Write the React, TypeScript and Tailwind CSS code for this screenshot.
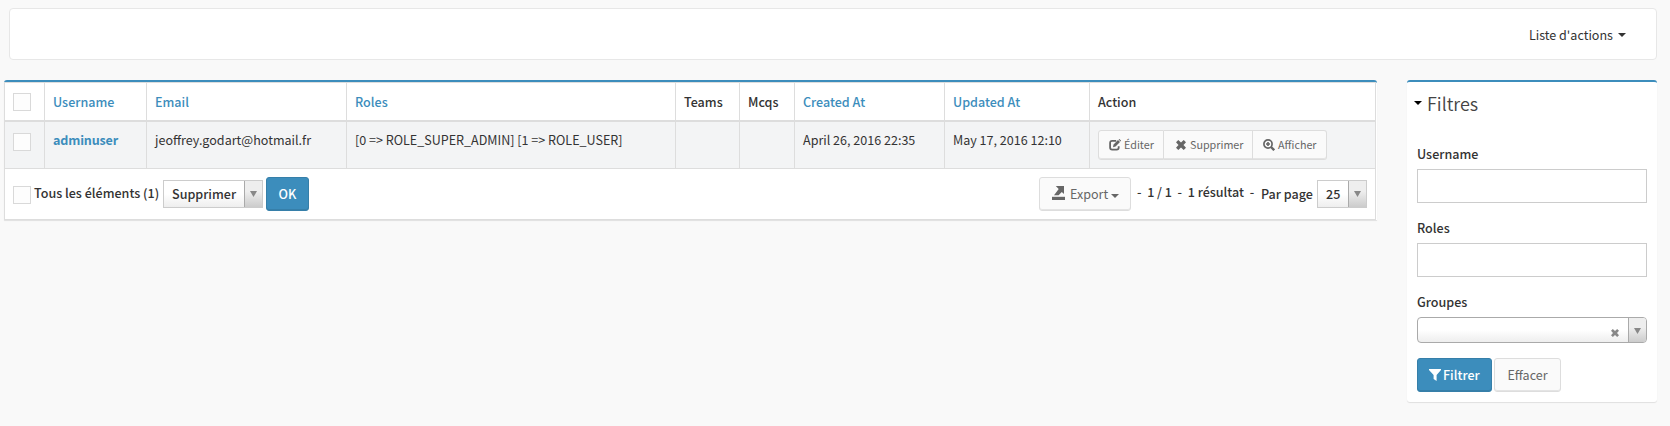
import React from "react";

const FONT = "font-['Noto_Sans_CJK_SC','Noto_Sans',sans-serif]";

function Caret({ className }: { className: string }) {
  return <span className={`inline-block h-0 w-0 border-x-4 border-t-4 border-x-transparent ${className}`} />;
}

function Check({ className = "" }: { className?: string }) {
  return <span className={`block h-[18px] w-[18px] shrink-0 border border-[#d9d9d9] bg-[#fdfdfd] ${className}`} />;
}

function Arrow({ className = "" }: { className?: string }) {
  return (
    <span className={`flex shrink-0 items-center justify-center border-l border-[#aaa] bg-linear-to-t from-[#ccc] to-[#eee] to-60% ${className}`}>
      <svg width="7" height="6" viewBox="0 0 7 6"><path d="M0 0h7L3.5 6z" fill="#888" /></svg>
    </span>
  );
}

function EditIcon() {
  return (
    <svg className="shrink-0" width="12" height="12" viewBox="0 0 12 12" fill="none">
      <path d="M7.2 1.9H3.2Q1.1 1.9 1.1 4v4.6q0 2.1 2.1 2.1h4.4q2.1 0 2.1-2.1V7.2" stroke="#666" strokeWidth="1.8" />
      <path d="M4 8.2l.5-2.6L9 1.1l2 2-4.5 4.5z M9.6.6l.8-.6 1.7 1.7-.6.8z" fill="#666" />
    </svg>
  );
}
function CrossIcon({ size, color }: { size: number; color: string }) {
  return (
    <svg className="shrink-0" width={size} height={size} viewBox="0 0 10 10">
      <path d="M2.3 0 5 2.5 7.7 0 10 2.3 7.5 5 10 7.7 7.7 10 5 7.5 2.3 10 0 7.7 2.5 5 0 2.3z" fill={color} />
    </svg>
  );
}
function ZoomIcon() {
  return (
    <svg className="shrink-0" width="12" height="12" viewBox="0 0 12 12" fill="none" stroke="#666">
      <circle cx="5" cy="5" r="4.1" strokeWidth="1.7" />
      <path d="M8 8l3.2 3.2" strokeWidth="2.4" />
      <path d="M5 3v4M3 5h4" strokeWidth="1.6" />
    </svg>
  );
}
function ExportIcon() {
  return (
    <svg className="-mt-[3px] shrink-0" width="14" height="14" viewBox="0 0 14 14" fill="#666">
      <path d="M0 10.8h13V14H0z" />
      <path d="M3.8 0H12v8L9.8 5.9 6.6 9.3H2L6.7 3z" />
    </svg>
  );
}
function FilterIcon() {
  return (
    <svg className="shrink-0" width="12" height="12" viewBox="0 0 12 12" fill="#fff">
      <path d="M0 0h12v1L7.6 6v6L4.6 10V6L0 1z" />
    </svg>
  );
}

const th = "flex items-center border-l border-[#ddd] pt-px pl-2 text-[12.55px] leading-5 font-medium";
const td = "border-l border-[#ddd] pl-2 text-[12.55px] leading-5";
const cols = "grid grid-cols-[40px_102px_200px_329px_64px_55px_150px_145px_287px]";
const grayBtn = "flex items-center border-[#ddd] bg-[#fafafa] text-[#666]";

export default function App() {
  return (
    <div className={`h-[426px] w-[1670px] overflow-hidden bg-[#f9f9f9] text-[#333] ${FONT}`}>
      <div className="flex flex-col gap-5 pt-2">
        <nav className="ml-[9px] flex h-[52px] w-[1648px] items-center justify-end rounded border border-[#e7e7e7] bg-white pt-[2px] pr-[30px] text-[12.55px] leading-5">
          <span>Liste d'actions</span>
          <Caret className="ml-[5px] border-t-[#333]" />
        </nav>
        <div className="flex items-start">
          <section className="ml-1 w-[1373px] rounded-t-[3px] border-t-2 border-[#3c8dbc] bg-white shadow-[0_1px_1px_rgba(0,0,0,0.1)]">
            <div className="w-[1372px] border-y border-r border-[#ddd]">
              <div className={`${cols} h-[39px] w-[1371px] border-b-2 border-[#ddd] text-[#3c8dbc]`}>
                <div className={`${th} pt-[3px]`}><Check /></div>
                <div className={th}>Username</div>
                <div className={th}>Email</div>
                <div className={th}>Roles</div>
                <div className={`${th} text-[#333]`}>Teams</div>
                <div className={`${th} text-[#333]`}>Mcqs</div>
                <div className={th}>Created At</div>
                <div className={th}>Updated At</div>
                <div className={`${th} text-[#333]`}>Action</div>
              </div>
              <div className={`${cols} h-[47px] w-[1371px] border-b border-[#ddd] bg-[#f3f4f5]`}>
                <div className={`${td} pt-[11px]`}><Check /></div>
                <div className={`${td} pt-2 font-bold tracking-[-0.15px] text-[#3c8dbc]`}>adminuser</div>
                <div className={`${td} pt-2`}>jeoffrey.godart@hotmail.fr</div>
                <div className={`${td} pt-2`}>[0 =&gt; ROLE_SUPER_ADMIN] [1 =&gt; ROLE_USER]</div>
                <div className={td} />
                <div className={td} />
                <div className={`${td} pt-2`}>April 26, 2016 22:35</div>
                <div className={`${td} pt-2`}>May 17, 2016 12:10</div>
                <div className="flex items-start border-l border-[#ddd] pt-2 pl-2 text-[10.75px] leading-[18px]">
                  <div className={`${grayBtn} h-[30px] w-[66px] gap-[3px] rounded-l-[3px] border pl-[10px] shadow-[inset_0_-1px_0_#e4e4e4]`}><EditIcon />Éditer</div>
                  <div className={`${grayBtn} h-[30px] w-[89px] gap-1 border-y border-r pl-3 shadow-[inset_0_-1px_0_#e4e4e4]`}><CrossIcon size={10} color="#666" />Supprimer</div>
                  <div className={`${grayBtn} h-[30px] w-[74px] gap-[3px] rounded-r-[3px] border-y border-r pl-[10px] shadow-[inset_0_-1px_0_#e4e4e4]`}><ZoomIcon />Afficher</div>
                </div>
              </div>
              <div className="flex h-[50px] items-start border-l border-[#ddd] pt-2 pl-2 text-[12.55px] leading-5 font-medium">
                <Check className="mt-[9px]" />
                <span className="mt-[6px] ml-[3px] w-[129px] whitespace-nowrap">Tous les éléments (1)</span>
                <div className="mt-[3px] flex h-7 w-[100px] border border-[#ccc] bg-linear-to-t from-[#eee] to-white to-50%">
                  <span className="flex-1 pt-[3px] pl-2">Supprimer</span>
                  <Arrow className="w-[18px]" />
                </div>
                <div className="ml-[3px] flex h-[34px] w-[43px] items-center justify-center rounded-[3px] border border-[#367fa9] bg-[#3c8dbc] text-white shadow-[inset_0_-1px_0_#367fa9]">OK</div>
                <div className={`${grayBtn} ml-[730px] h-[34px] w-[92px] rounded-[3px] border pl-3 font-normal shadow-[inset_0_-1px_0_#e4e4e4]`}>
                  <ExportIcon /><span className="ml-1">Export</span><Caret className="mt-[3px] ml-[3px] border-t-[#666]" />
                </div>
                <span className="mt-[5px] ml-[6px] w-[124px] whitespace-pre">-  1 / 1  -  1 résultat  -</span>
                <span className="mt-[7px] w-[56px] whitespace-nowrap">Par page</span>
                <div className="mt-[3px] flex h-7 w-[50px] border border-[#ccc] bg-linear-to-t from-[#eee] to-white to-50%">
                  <span className="flex-1 pt-[3px] pl-2">25</span>
                  <Arrow className="w-[18px]" />
                </div>
              </div>
            </div>
          </section>
          <aside className="ml-[30px] h-[322px] w-[250px] rounded-[3px] border-t-2 border-[#3c8dbc] bg-white px-[10px] shadow-[0_1px_1px_rgba(0,0,0,0.1)]">
            <div className="-ml-[3px] flex h-[42px] items-center text-[18px] leading-5 font-[350] text-[#444]">
              <Caret className="mr-[5px] border-t-black" />Filtres
            </div>
            <div className="pt-5 text-[12.55px] leading-5 font-medium">
              <div>Username</div>
              <div className="mt-[5px] h-[34px] border border-[#ccc]" />
              <div className="mt-[15px]">Roles</div>
              <div className="mt-[5px] h-[34px] border border-[#ccc]" />
              <div className="mt-[15px]">Groupes</div>
              <div className="mt-[5px] flex h-[26px] overflow-hidden rounded border border-[#aaa] bg-linear-to-t from-[#eee] to-white to-50%">
                <span className="flex flex-1 items-center justify-end pt-[6px] pr-[9px]"><CrossIcon size={8} color="#888" /></span>
                <Arrow className="w-[18px] pt-[2px]" />
              </div>
              <div className="mt-[15px] flex gap-[2px]">
                <div className="flex h-[34px] w-[75px] items-center gap-[2px] rounded-[3px] border border-[#367fa9] bg-[#3c8dbc] pl-[11px] text-white shadow-[inset_0_-1px_0_#367fa9]"><FilterIcon />Filtrer</div>
                <div className={`${grayBtn} h-[34px] w-[67px] justify-center rounded-[3px] border font-normal shadow-[inset_0_-1px_0_#e4e4e4]`}>Effacer</div>
              </div>
            </div>
          </aside>
        </div>
      </div>
    </div>
  );
}
